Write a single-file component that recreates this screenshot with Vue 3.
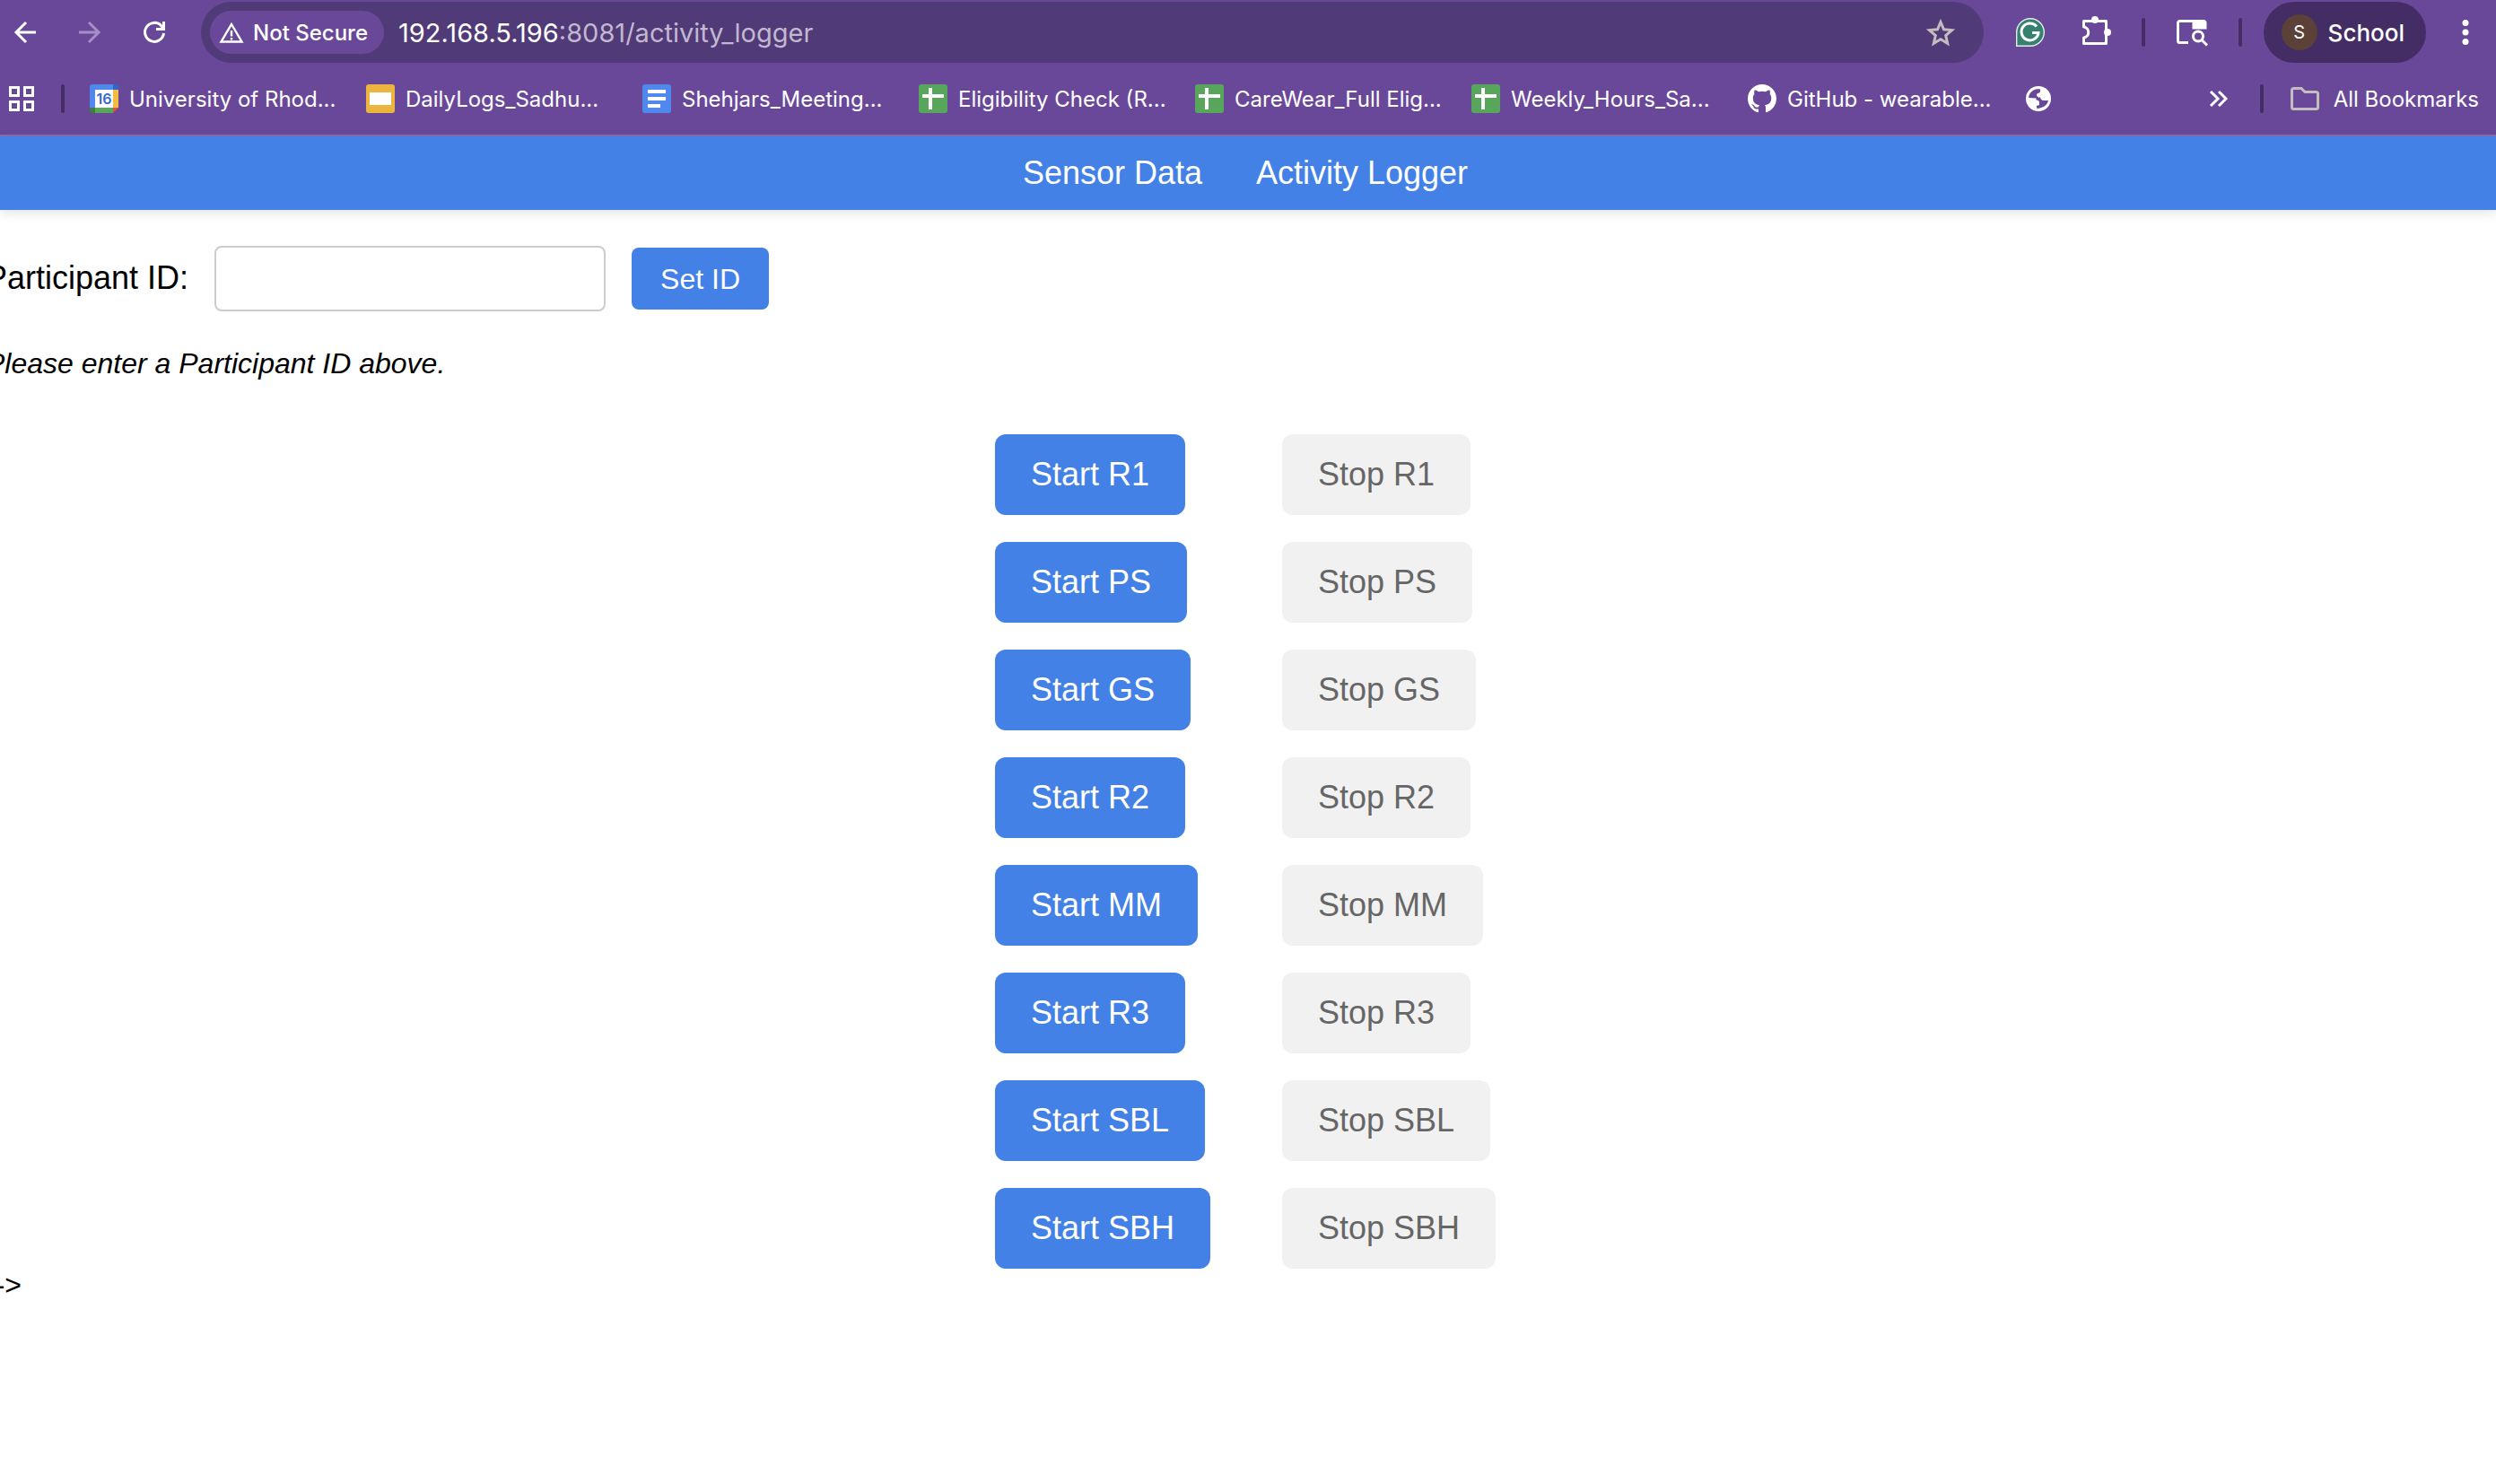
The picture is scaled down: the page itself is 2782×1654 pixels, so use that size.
<script setup>
const bookmarks = [
  { icon: 'calendar', text: 'University of Rhod...' },
  { icon: 'slides', text: 'DailyLogs_Sadhu...' },
  { icon: 'docs', text: 'Shehjars_Meeting...' },
  { icon: 'sheets', text: 'Eligibility Check (R...' },
  { icon: 'sheets', text: 'CareWear_Full Elig...' },
  { icon: 'sheets', text: 'Weekly_Hours_Sa...' },
  { icon: 'github', text: 'GitHub - wearable...' },
]
const activities = ['R1', 'PS', 'GS', 'R2', 'MM', 'R3', 'SBL', 'SBH']
</script>

<template>
  <div class="window">
    <header class="browser">
      <div class="toolbar">
        <button class="icon-btn" aria-label="Back">
          <svg width="24" height="24" viewBox="0 0 24 24" fill="none" stroke="#fff" stroke-width="3"><path d="M24 12H2M13 1L2 12l11 11" /></svg>
        </button>
        <button class="icon-btn forward" aria-label="Forward">
          <svg width="24" height="24" viewBox="0 0 24 24" fill="none" stroke="#a58fc4" stroke-width="3"><path d="M0 12h22M11 1l11 11-11 11" /></svg>
        </button>
        <button class="icon-btn reload" aria-label="Reload">
          <svg width="24" height="24" viewBox="0 0 24 24" fill="none" stroke="#fff" stroke-width="3"><path d="M22.500 13A10.500 10.500 0 1 1 20 5l2 3M22.500 0v8.500H14" /></svg>
        </button>
        <div class="omnibox">
          <button class="chip">
            <svg width="28" height="25" viewBox="0 0 28 25"><path d="M14 3L2.500 22.500h23z" fill="none" stroke="#fff" stroke-width="2.400" /><path d="M14 10v6.500M14 18v2.500" stroke="#fff" stroke-width="2.400" /></svg>
            <span>Not Secure</span>
          </button>
          <div class="url"><span class="host">192.168.5.196</span>:8081/activity_logger</div>
          <button class="icon-btn" aria-label="Bookmark this page">
            <svg width="32" height="30" viewBox="0 0 32 30"><path d="M16 3.500l3.500 8.300 9 .8-6.800 5.900 2 8.800-7.700-4.600-7.700 4.600 2-8.800-6.800-5.900 9-.8z" fill="none" stroke="#c3bdc0" stroke-width="3" /></svg>
          </button>
        </div>
        <div class="tools">
          <button class="icon-btn" aria-label="Grammarly">
            <svg width="32" height="32" viewBox="0 0 32 32"><path d="M.7 31.300V16A15.300 15.300 0 1 1 16 31.300z" fill="#36806f" stroke="#e4ece9" stroke-width="1.400" /><path d="M23 9.500A9.500 9.500 0 1 0 25 16.500H18" fill="none" stroke="#fff" stroke-width="3" /></svg>
          </button>
          <button class="icon-btn puzzle" aria-label="Extensions">
            <svg width="34" height="36" viewBox="0 0 34 36"><path d="M3.500 5.500h25v25h-25V24c7-1 7-11 0-12z" fill="none" stroke="#fff" stroke-width="3" stroke-linejoin="round" /><circle cx="16" cy="4" r="4" fill="#fff" /><circle cx="30" cy="18" r="4" fill="#fff" /></svg>
          </button>
          <i class="divider"></i>
          <button class="icon-btn" aria-label="Search tabs">
            <svg width="36" height="32" viewBox="0 0 36 32" fill="none" stroke="#fff" stroke-width="3"><path d="M14 27.500H4.500a2 2 0 0 1-2-2v-20a2 2 0 0 1 2-2H31a2 2 0 0 1 2 2V11H20V4" /><path d="M20 3h13v8H20z" fill="#fff" stroke="none" /><circle cx="25" cy="20.500" r="5.500" /><path d="M29 24.500l6 6" /></svg>
          </button>
          <i class="divider"></i>
          <button class="profile"><span class="avatar">S</span><span>School</span></button>
          <button class="icon-btn" aria-label="Menu">
            <svg width="8" height="28" viewBox="0 0 8 28" fill="#fff"><circle cx="4" cy="3.500" r="3.500" /><circle cx="4" cy="14" r="3.500" /><circle cx="4" cy="24.500" r="3.500" /></svg>
          </button>
        </div>
      </div>

      <div class="bookmarks">
        <button class="icon-btn" aria-label="Apps">
          <svg width="28" height="28" viewBox="0 0 28 28" fill="none" stroke="#fff" stroke-width="3"><path d="M1.500 1.500h9v9h-9zM17.500 1.500h9v9h-9zM1.500 17.500h9v9h-9zM17.500 17.500h9v9h-9z" /></svg>
        </button>
        <i class="divider"></i>
        <nav class="bookmark-list">
          <a v-for="b in bookmarks" :key="b.text" href="#" class="bookmark">
            <svg v-if="b.icon === 'calendar'" width="32" height="32" viewBox="0 0 32 32"><path d="M3 0h23v6H6v20H0V3a3 3 0 0 1 3-3z" fill="#5088ee" /><path d="M26 0h3a3 3 0 0 1 3 3v3h-6z" fill="#2f66c8" /><path d="M26 6h6v20h-6z" fill="#f3bb44" /><path d="M26 26h6l-6 6z" fill="#dc5144" /><path d="M6 26h20v6H6z" fill="#58a55c" /><path d="M0 26h6v6H3a3 3 0 0 1-3-3z" fill="#3b7f43" /><path d="M6 6h20v20H6z" fill="#fff" /><text x="16" y="22" text-anchor="middle" font-size="16" font-weight="600" fill="#3069ce">16</text></svg>
            <svg v-else-if="b.icon === 'slides'" width="32" height="32" viewBox="0 0 32 32"><rect width="32" height="32" rx="3" fill="#ebb53f" /><path d="M4 9h24v14H4z" fill="#fff" /></svg>
            <svg v-else-if="b.icon === 'docs'" width="32" height="32" viewBox="0 0 32 32"><rect width="32" height="32" rx="3" fill="#5088ee" /><path d="M6 6h20v4H6zM6 14h20v4H6zM6 22h14v4H6z" fill="#fff" /></svg>
            <svg v-else-if="b.icon === 'sheets'" width="32" height="32" viewBox="0 0 32 32"><rect width="32" height="32" rx="3" fill="#58a55c" /><path d="M4 11h24v4H4zM11 4h4v24h-4z" fill="#fff" /></svg>
            <svg v-else width="32" height="32" viewBox="0 0 16 16"><path fill="#fff" d="M8 0C3.580 0 0 3.580 0 8c0 3.540 2.290 6.530 5.470 7.590.4.070.55-.17.55-.38 0-.19-.01-.82-.01-1.490-2.010.37-2.530-.49-2.690-.94-.09-.23-.48-.94-.82-1.130-.28-.15-.68-.52-.01-.53.63-.01 1.080.58 1.230.82.72 1.210 1.870.87 2.330.66.07-.52.28-.87.51-1.070-1.780-.2-3.640-.89-3.640-3.950 0-.87.31-1.590.82-2.150-.08-.2-.36-1.020.08-2.120 0 0 .67-.21 2.200.82.64-.18 1.320-.27 2-.27s1.360.09 2 .27c1.530-1.040 2.200-.82 2.200-.82.44 1.100.16 1.920.08 2.120.51.56.82 1.270.82 2.150 0 3.070-1.870 3.750-3.650 3.950.29.25.54.73.54 1.480 0 1.070-.01 1.930-.01 2.200 0 .21.15.46.55.38A8.010 8.010 0 0 0 16 8c0-4.420-3.580-8-8-8z" /></svg>
            <span>{{ b.text }}</span>
          </a>
          <a href="#" class="bookmark" aria-label="Site">
            <svg width="32" height="32" viewBox="0 0 32 32"><circle cx="16" cy="16" r="14" fill="#fff" /><path d="M5 15C5.500 10 9 6.500 14 5.300h4v2.200c0 1.500-1 2.500-3 2.500l-1 1v2l2 1c0 1-.5 1.500-2 1.500zM18 14c0 2 1.500 4 4 4h5C26 23 21 27 14 26.800V24l3-1v-2.500c0-2-1-3-3.500-3V15h3z" fill="#69489a" /></svg>
          </a>
        </nav>
        <button class="icon-btn more" aria-label="More bookmarks">
          <svg width="20" height="18" viewBox="0 0 20 18" fill="none" stroke="#fff" stroke-width="3"><path d="M1 1l8 8-8 8M10 1l8 8-8 8" /></svg>
        </button>
        <i class="divider"></i>
        <button class="all">
          <svg width="32" height="26" viewBox="0 0 32 26"><path d="M3.500 1.500H12l4 4h12.500a2 2 0 0 1 2 2v15a2 2 0 0 1-2 2h-25a2 2 0 0 1-2-2v-19a2 2 0 0 1 2-2z" fill="none" stroke="#c3bdc0" stroke-width="3" /></svg>
          <span>All Bookmarks</span>
        </button>
      </div>
    </header>

    <nav class="site-nav">
      <a href="#">Sensor Data</a>
      <a href="#">Activity Logger</a>
    </nav>

    <main class="page">
      <form class="id-form" @submit.prevent>
        <label for="pid">Participant ID:</label>
        <input id="pid" type="text" />
        <button type="submit">Set ID</button>
      </form>
      <p class="status">Please enter a Participant ID above.</p>
      <div class="activities">
        <template v-for="a in activities" :key="a">
          <button class="start">Start {{ a }}</button>
          <button class="stop" disabled>Stop {{ a }}</button>
        </template>
      </div>
      <div class="stray">--&gt;</div>
    </main>
  </div>
</template>

<style>
body {
  margin: 0;
  background: #fff;
  overflow-x: hidden;
}
</style>

<style scoped>
.window {
  font-family: "Liberation Sans", Arial, sans-serif;
  color: #000;
}
button {
  font: inherit;
  border: 0;
  padding: 0;
  margin: 0;
  background: none;
  color: inherit;
  white-space: nowrap;
}
a {
  color: inherit;
  text-decoration: none;
}
svg {
  display: block;
  flex: none;
  overflow: visible;
}
.browser {
  background: #69489a;
  border-bottom: 2px solid #8a6bb0;
  color: #fff;
  font-family: Inter, "Noto Sans", sans-serif;
  font-size: 24px;
  font-weight: 500;
}
.toolbar {
  display: flex;
  align-items: center;
  padding: 2px 30px 0 16px;
}
.forward,
.reload {
  margin-left: 48px;
}
.omnibox {
  flex: 1;
  display: flex;
  align-items: center;
  height: 68px;
  margin-left: 40px;
  padding: 0 32px 0 10px;
  border-radius: 34px;
  background: #513a78;
  box-sizing: border-box;
}
.chip {
  display: flex;
  align-items: center;
  gap: 10px;
  height: 48px;
  padding: 0 18px 0 10px;
  border-radius: 24px;
  background: #69489a;
}
.url {
  flex: 1;
  margin-left: 16px;
  font-size: 29px;
  font-weight: 400;
  color: #c2b8d0;
}
.host {
  color: #fff;
}
.tools {
  display: flex;
  align-items: center;
  margin-left: 36px;
}
.puzzle {
  margin-left: 40px;
}
.divider {
  flex: none;
  width: 4px;
  height: 32px;
  border-radius: 2px;
  background: #432d64;
}
.tools .divider {
  margin: 0 34px;
}
.tools .divider + .profile {
  margin-left: -10px;
}
.profile {
  display: flex;
  align-items: center;
  gap: 12px;
  height: 68px;
  margin-right: 40px;
  padding: 0 24px 0 20px;
  border-radius: 34px;
  background: #432d64;
  font-size: 26px;
}
.avatar {
  width: 40px;
  height: 40px;
  border-radius: 50%;
  background: #5b4138;
  font-size: 20px;
  line-height: 40px;
  font-weight: 400;
}
.bookmarks {
  display: flex;
  align-items: center;
  height: 80px;
  padding: 0 19px 0 10px;
}
.bookmarks > .divider {
  margin: 0 30px;
}
.more + .divider {
  margin-left: 36px;
}
.bookmark-list {
  flex: 1;
  display: flex;
  margin-left: -2px;
}
.bookmark {
  display: flex;
  align-items: center;
  gap: 12px;
  width: 308px;
  white-space: nowrap;
}
.bookmark:last-child {
  width: auto;
}
.bookmark,
.all {
  font-weight: 400;
}
.all {
  display: flex;
  align-items: center;
  gap: 16px;
}
.site-nav {
  display: flex;
  justify-content: center;
  gap: 60px;
  padding: 20px 6px 20px 0;
  background: #4381e6;
  box-shadow: 0 4px 12px rgba(0, 0, 0, 0.1);
  color: #fff;
  font-size: 36px;
  line-height: 42px;
}
.page {
  margin-left: -16px;
  padding-top: 40px;
  font-size: 32px;
  line-height: 36px;
}
.id-form {
  display: flex;
  align-items: center;
}
.id-form label {
  padding-bottom: 2px;
  font-size: 36px;
}
.id-form input {
  width: 436px;
  height: 73px;
  margin: 0 29px;
  border: 2px solid #ccc;
  border-radius: 8px;
  background: #fff;
  font: inherit;
  padding: 0 16px;
  box-sizing: border-box;
}
.id-form button {
  height: 69px;
  padding: 0 32px;
  border-radius: 8px;
  background: #4381e6;
  color: #fff;
}
.status {
  margin: 40px 0 61px;
  font-style: italic;
}
.activities {
  display: grid;
  grid-template-columns: 240px 238px;
  justify-content: center;
  justify-items: start;
  gap: 30px 80px;
  padding-left: 10px;
}
.activities button {
  height: 90px;
  padding: 0 40px;
  border-radius: 12px;
  font-size: 36px;
}
.start {
  background: #4381e6;
  color: #fff;
}
.stop {
  background: #f1f1f1;
  color: #666;
}
</style>
